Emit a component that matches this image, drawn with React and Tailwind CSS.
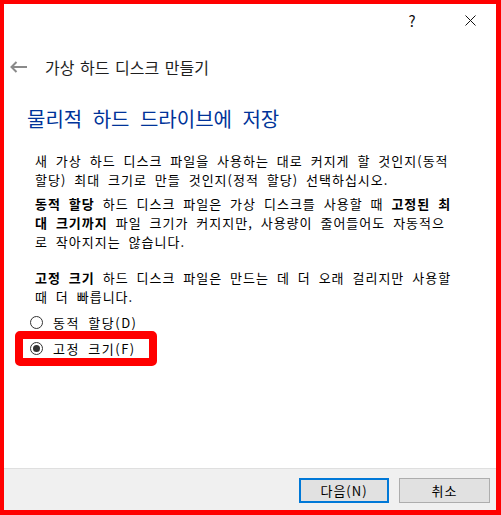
import React from 'react'

function Radio({ checked }) {
  return (
    <span className="flex size-[13px] shrink-0 items-center justify-center rounded-full border border-[#333333] bg-white">
      {checked && <span className="size-[7px] rounded-full bg-[#333333]" />}
    </span>
  )
}

export default function App() {
  return (
    <div className="flex h-[515px] w-[501px] flex-col border-b-[5px] border-l-4 border-r-[5px] border-t-4 border-[#ff0000] bg-white font-['Noto_Sans_CJK_KR',sans-serif] text-black">
      {/* title bar */}
      <div className="flex h-[32px] shrink-0 items-center justify-end gap-[18px] pr-[6px]">
        <span className="flex w-[40px] justify-center text-[15px] leading-none text-[#111]">?</span>
        <span className="flex w-[40px] justify-center">
          <svg width="11" height="11" viewBox="0 0 11 11" stroke="#111" strokeWidth="1">
            <path d="M0.5 0.5 L10.5 10.5 M10.5 0.5 L0.5 10.5" />
          </svg>
        </span>
      </div>

      {/* back + wizard title */}
      <div className="mt-[16px] flex h-[30px] shrink-0 items-center gap-[18px] pl-[6px]">
        <svg width="17" height="12" viewBox="0 0 17 12" fill="none" stroke="#8a8a8a" strokeWidth="2">
          <path d="M1.5 6 H17 M6.5 1 L1.5 6 L6.5 11" />
        </svg>
        <span className="text-[16px] leading-none text-[#1e1e1e] [word-spacing:2px]">가상 하드 디스크 만들기</span>
      </div>

      {/* main instruction */}
      <h1 className="mt-[24px] pl-[23px] text-[20px] leading-[26px] font-normal text-[#003399] [word-spacing:6px]">
        물리적 하드 드라이브에 저장
      </h1>

      <div className="whitespace-nowrap pl-[31px] text-[13px] leading-[19px] tracking-[1px] [word-spacing:4px]">
        <p className="mt-[19px]">
          새 가상 하드 디스크 파일을 사용하는 대로 커지게 할 것인지(동적
          <br />
          할당) 최대 크기로 만들 것인지(정적 할당) 선택하십시오.
        </p>
        <p className="mt-[5px]">
          <b>동적 할당</b> 하드 디스크 파일은 가상 디스크를 사용할 때 <b>고정된 최</b>
          <br />
          <b>대 크기까지</b> 파일 크기가 커지지만, 사용량이 줄어들어도 자동적으
          <br />
          로 작아지지는 않습니다.
        </p>
        <p className="mt-[17px]">
          <b>고정 크기</b> 하드 디스크 파일은 만드는 데 더 오래 걸리지만 사용할
          <br />
          때 더 빠릅니다.
        </p>
      </div>

      {/* options */}
      <div className="mt-[8px] ml-[26px] flex h-[17px] items-center gap-[10px] text-[13px] tracking-[1.5px] [word-spacing:4px]">
        <Radio />
        <span>동적 할당(D)</span>
      </div>
      <div className="ml-[11px] w-[142px] rounded-[5px] border-8 border-[#ff0000]">
        <div className="flex h-[19px] items-center gap-[10px] pl-[7px] text-[13px] tracking-[1.5px] [word-spacing:4px]">
          <Radio checked />
          <span>고정 크기(F)</span>
        </div>
      </div>

      <div className="flex-1" />

      {/* footer */}
      <div className="flex h-[42px] shrink-0 items-start justify-end gap-[10px] border-t border-[#dfdfdf] bg-[#f0f0f0] pr-[6px] pt-[9px]">
        <button className="flex h-[25px] w-[90px] items-center justify-center border-2 border-[#0078d7] bg-[#e1e1e1] text-[13px] tracking-[1px]">
          다음(N)
        </button>
        <button className="flex h-[25px] w-[91px] items-center justify-center border border-[#adadad] bg-[#e1e1e1] text-[13px] tracking-[1px]">
          취소
        </button>
      </div>
    </div>
  )
}
